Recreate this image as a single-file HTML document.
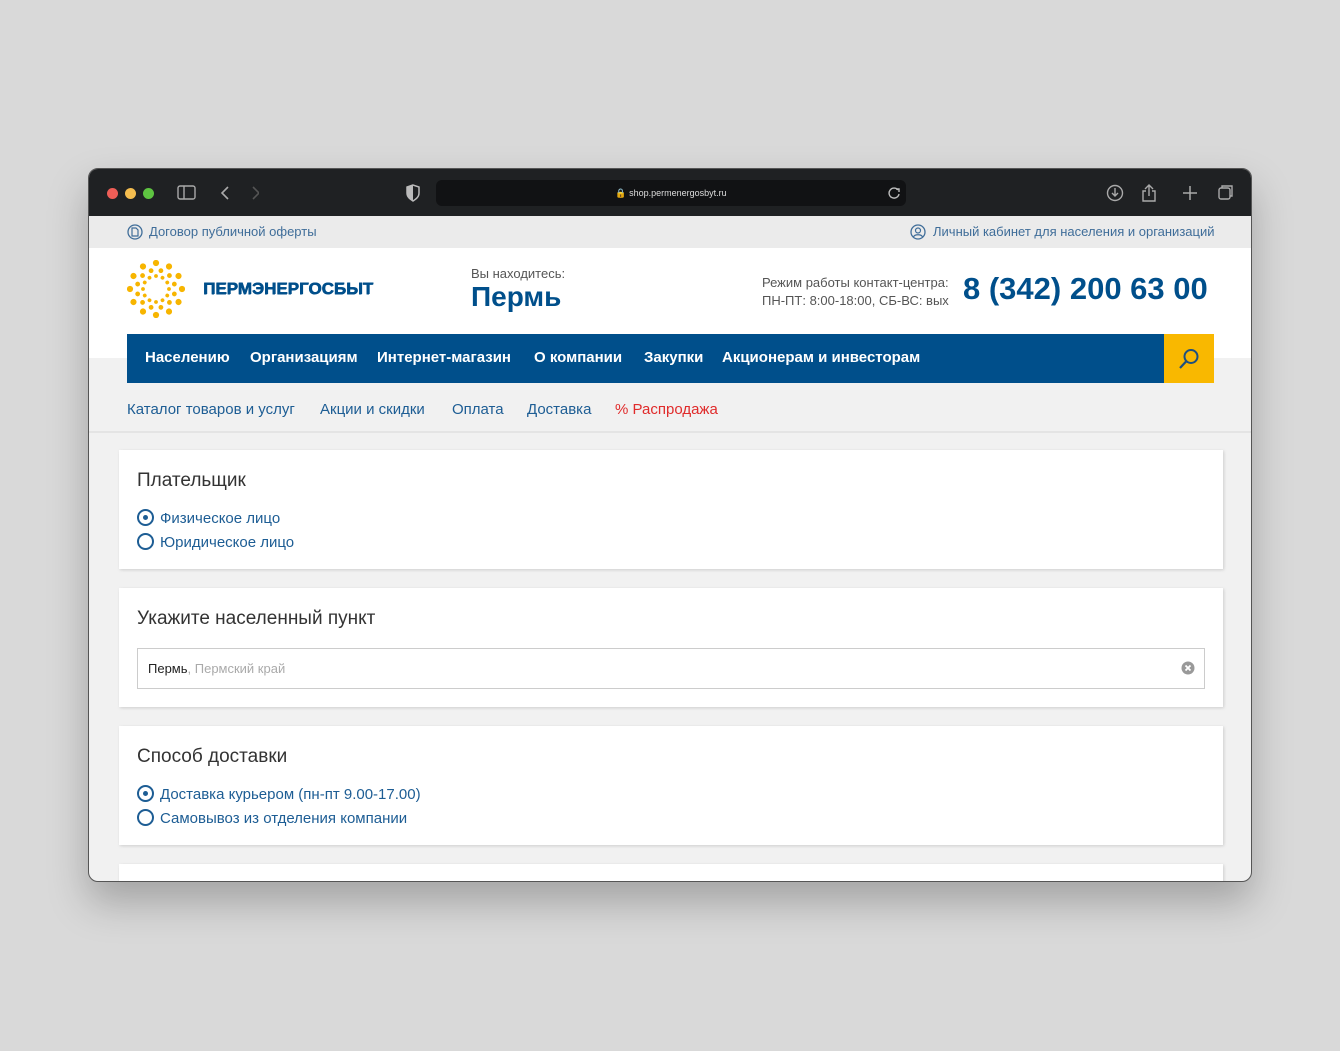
<!DOCTYPE html>
<html><head><meta charset="utf-8"><style>
*{margin:0;padding:0;box-sizing:border-box}
body{width:1340px;height:1051px;background:#d9d9d9;font-family:"Liberation Sans",sans-serif;position:relative;overflow:hidden}
.win{position:absolute;left:88px;top:168px;width:1164px;height:714px;border-radius:10px;overflow:hidden;background:#f1f1f1;box-shadow:0 20px 40px rgba(0,0,0,.25);border:1px solid #555}
.tb{position:absolute;left:0;top:0;width:100%;height:47px;background:#1f2123}
.dot{position:absolute;top:19px;width:11px;height:11px;border-radius:50%}
.url{position:absolute;left:347px;top:11px;width:470px;height:26px;background:#111214;border-radius:6px;color:#ddd;font-size:9px;text-align:center;line-height:26px}
.top{position:absolute;left:0;top:47px;width:100%;height:32px;background:#ebebeb;font-size:13px;color:#3f6d99}
.hdr{position:absolute;left:0;top:79px;width:100%;height:110px;background:#fff}
.nav{position:absolute;left:38px;top:165px;width:1037px;height:49px;background:#004f8b;color:#fff;font-size:15px;font-weight:bold}
.nav span{position:absolute;top:15px}
.srch{position:absolute;left:1075px;top:165px;width:50px;height:49px;background:#f9b800}
.sub{position:absolute;left:38px;top:232px;font-size:15px;color:#1d5d94}
.sub span{position:absolute;white-space:nowrap}
.line{position:absolute;left:0;top:262px;width:100%;height:2px;background:#e4e4e4}
.card{position:absolute;left:30px;width:1104px;background:#fff;box-shadow:1px 1px 3px rgba(0,0,0,.15)}
.card h3{position:absolute;left:18px;top:20px;font-size:19px;font-weight:normal;color:#333}
.r{position:absolute;left:18px;font-size:15px;color:#1d5d94}
.r i{display:inline-block;width:17px;height:17px;border:2px solid #1d5d94;border-radius:50%;vertical-align:-3px;margin-right:6px;position:relative}
.r i.on:after{content:"";position:absolute;left:4px;top:4px;width:5px;height:5px;border-radius:50%;background:#1d5d94}
</style></head><body>
<div class="win">
<div class="tb">
<div class="dot" style="left:18px;background:#ee5e57"></div>
<div class="dot" style="left:36px;background:#f4bd4f"></div>
<div class="dot" style="left:54px;background:#5ec441"></div>
<svg style="position:absolute;left:88px;top:16px" width="20" height="16"><rect x="1" y="1" width="17" height="13" rx="2" fill="none" stroke="#aaa" stroke-width="1.4"/><line x1="7" y1="1" x2="7" y2="14" stroke="#aaa" stroke-width="1.4"/></svg>
<svg style="position:absolute;left:130px;top:16px" width="40" height="16"><path d="M9 2L3 8l6 6" fill="none" stroke="#aaa" stroke-width="1.6"/><path d="M34 2l6 6-6 6" fill="none" stroke="#555" stroke-width="1.6"/></svg>
<svg style="position:absolute;left:316px;top:15px" width="16" height="18"><path d="M8 1L2 3v6c0 4 3 6 6 8 3-2 6-4 6-8V3z" fill="none" stroke="#bbb" stroke-width="1.5"/><path d="M8 1v16c-3-2-6-4-6-8V3z" fill="#bbb"/></svg>
<div class="url">🔒 shop.permenergosbyt.ru</div>
<svg style="position:absolute;left:798px;top:17px" width="14" height="14"><path d="M11 4A5 5 0 1 0 12 8" fill="none" stroke="#bbb" stroke-width="1.4"/><path d="M9 3h3v3" fill="none" stroke="#bbb" stroke-width="1.4"/></svg>
<svg style="position:absolute;left:1016px;top:14px" width="130" height="20"><circle cx="10" cy="10" r="7.5" fill="none" stroke="#aaa" stroke-width="1.4"/><path d="M10 5v8M7 10l3 3 3-3" fill="none" stroke="#aaa" stroke-width="1.4"/><path d="M44 2v11M40 6l4-4 4 4M41 8h-3v10h12V8h-3" fill="none" stroke="#aaa" stroke-width="1.4"/><path d="M85 3v14M78 10h14" stroke="#aaa" stroke-width="1.5"/><rect x="114" y="5" width="11" height="11" rx="2" fill="none" stroke="#aaa" stroke-width="1.4"/><path d="M117 5V3h10v10h-2" fill="none" stroke="#aaa" stroke-width="1.4"/></svg>
</div>
<div class="top">
<svg style="position:absolute;left:38px;top:8px" width="16" height="16"><circle cx="8" cy="8" r="7" fill="none" stroke="#3f6d99" stroke-width="1.3"/><path d="M5 4h4l2 2v6H5z" fill="none" stroke="#3f6d99" stroke-width="1.2"/></svg>
<span style="position:absolute;left:60px;top:8px">Договор публичной оферты</span>
<svg style="position:absolute;left:821px;top:8px" width="16" height="16"><circle cx="8" cy="8" r="7" fill="none" stroke="#3f6d99" stroke-width="1.3"/><circle cx="8" cy="6.5" r="2.5" fill="none" stroke="#3f6d99" stroke-width="1.2"/><path d="M3.5 13c1-3 8-3 9 0" fill="none" stroke="#3f6d99" stroke-width="1.2"/></svg>
<span style="position:absolute;left:844px;top:8px">Личный кабинет для населения и организаций</span>
</div>
<div class="hdr">
<svg style="position:absolute;left:38px;top:12px" width="58" height="58">
<defs><circle id="a" cx="29" cy="3" r="3.1" fill="#f7b500"/><circle id="b" cx="29" cy="10" r="2.4" fill="#f7b500"/><circle id="c" cx="29" cy="16" r="1.9" fill="#f7b500"/></defs>
<g><use href="#a"/><use href="#a" transform="rotate(30 29 29)"/><use href="#a" transform="rotate(60 29 29)"/><use href="#a" transform="rotate(90 29 29)"/><use href="#a" transform="rotate(120 29 29)"/><use href="#a" transform="rotate(150 29 29)"/><use href="#a" transform="rotate(180 29 29)"/><use href="#a" transform="rotate(210 29 29)"/><use href="#a" transform="rotate(240 29 29)"/><use href="#a" transform="rotate(270 29 29)"/><use href="#a" transform="rotate(300 29 29)"/><use href="#a" transform="rotate(330 29 29)"/></g>
<g transform="rotate(15 29 29)"><use href="#b"/><use href="#b" transform="rotate(30 29 29)"/><use href="#b" transform="rotate(60 29 29)"/><use href="#b" transform="rotate(90 29 29)"/><use href="#b" transform="rotate(120 29 29)"/><use href="#b" transform="rotate(150 29 29)"/><use href="#b" transform="rotate(180 29 29)"/><use href="#b" transform="rotate(210 29 29)"/><use href="#b" transform="rotate(240 29 29)"/><use href="#b" transform="rotate(270 29 29)"/><use href="#b" transform="rotate(300 29 29)"/><use href="#b" transform="rotate(330 29 29)"/></g>
<g><use href="#c"/><use href="#c" transform="rotate(30 29 29)"/><use href="#c" transform="rotate(60 29 29)"/><use href="#c" transform="rotate(90 29 29)"/><use href="#c" transform="rotate(120 29 29)"/><use href="#c" transform="rotate(150 29 29)"/><use href="#c" transform="rotate(180 29 29)"/><use href="#c" transform="rotate(210 29 29)"/><use href="#c" transform="rotate(240 29 29)"/><use href="#c" transform="rotate(270 29 29)"/><use href="#c" transform="rotate(300 29 29)"/><use href="#c" transform="rotate(330 29 29)"/></g>
</svg>
<div style="position:absolute;left:114px;top:31px;font-size:17px;font-weight:bold;color:#004f8b;text-shadow:0.6px 0 0 #004f8b,0 0.4px 0 #004f8b">ПЕРМЭНЕРГОСБЫТ</div>
<div style="position:absolute;left:382px;top:18px;font-size:13px;color:#555">Вы находитесь:</div>
<div style="position:absolute;left:382px;top:33px;font-size:28px;font-weight:bold;color:#004f8b">Пермь</div>
<div style="position:absolute;left:673px;top:26px;font-size:13px;color:#555;line-height:18px">Режим работы контакт-центра:<br>ПН-ПТ: 8:00-18:00, СБ-ВС: вых</div>
<div style="position:absolute;left:874px;top:23px;font-size:31px;font-weight:bold;color:#004f8b">8 (342) 200 63 00</div>
</div>
<div class="nav"><span style="left:18px">Населению</span><span style="left:123px">Организациям</span><span style="left:250px">Интернет-магазин</span><span style="left:407px">О компании</span><span style="left:517px">Закупки</span><span style="left:595px">Акционерам и инвесторам</span></div>
<div class="srch"><svg style="position:absolute;left:14px;top:14px" width="22" height="22"><circle cx="13" cy="8.5" r="6.5" fill="none" stroke="#1d4f7f" stroke-width="2"/><path d="M8.5 13L2 20" stroke="#1d4f7f" stroke-width="2.2"/></svg></div>
<div class="sub"><span style="left:0">Каталог товаров и услуг</span><span style="left:193px">Акции и скидки</span><span style="left:325px">Оплата</span><span style="left:400px">Доставка</span><span style="left:488px;color:#e02b2b">% Распродажа</span></div>
<div class="line"></div>
<div class="card" style="top:281px;height:119px"><h3>Плательщик</h3>
<div class="r" style="top:59px"><i class="on"></i>Физическое лицо</div>
<div class="r" style="top:83px"><i></i>Юридическое лицо</div></div>
<div class="card" style="top:419px;height:119px"><h3>Укажите населенный пункт</h3>
<div style="position:absolute;left:18px;top:60px;width:1068px;height:41px;border:1px solid #ccc;font-size:13px;line-height:39px;padding-left:10px;color:#aaa"><b style="color:#222;font-weight:normal">Пермь</b>, Пермский край
<svg style="position:absolute;right:9px;top:12px" width="14" height="14"><circle cx="7" cy="7" r="6.5" fill="#999"/><path d="M4.5 4.5l5 5M9.5 4.5l-5 5" stroke="#fff" stroke-width="1.8"/></svg></div></div>
<div class="card" style="top:557px;height:119px"><h3>Способ доставки</h3>
<div class="r" style="top:59px"><i class="on"></i>Доставка курьером (пн-пт 9.00-17.00)</div>
<div class="r" style="top:83px"><i></i>Самовывоз из отделения компании</div></div>
<div class="card" style="top:695px;height:40px"></div>
</div>
</body></html>
